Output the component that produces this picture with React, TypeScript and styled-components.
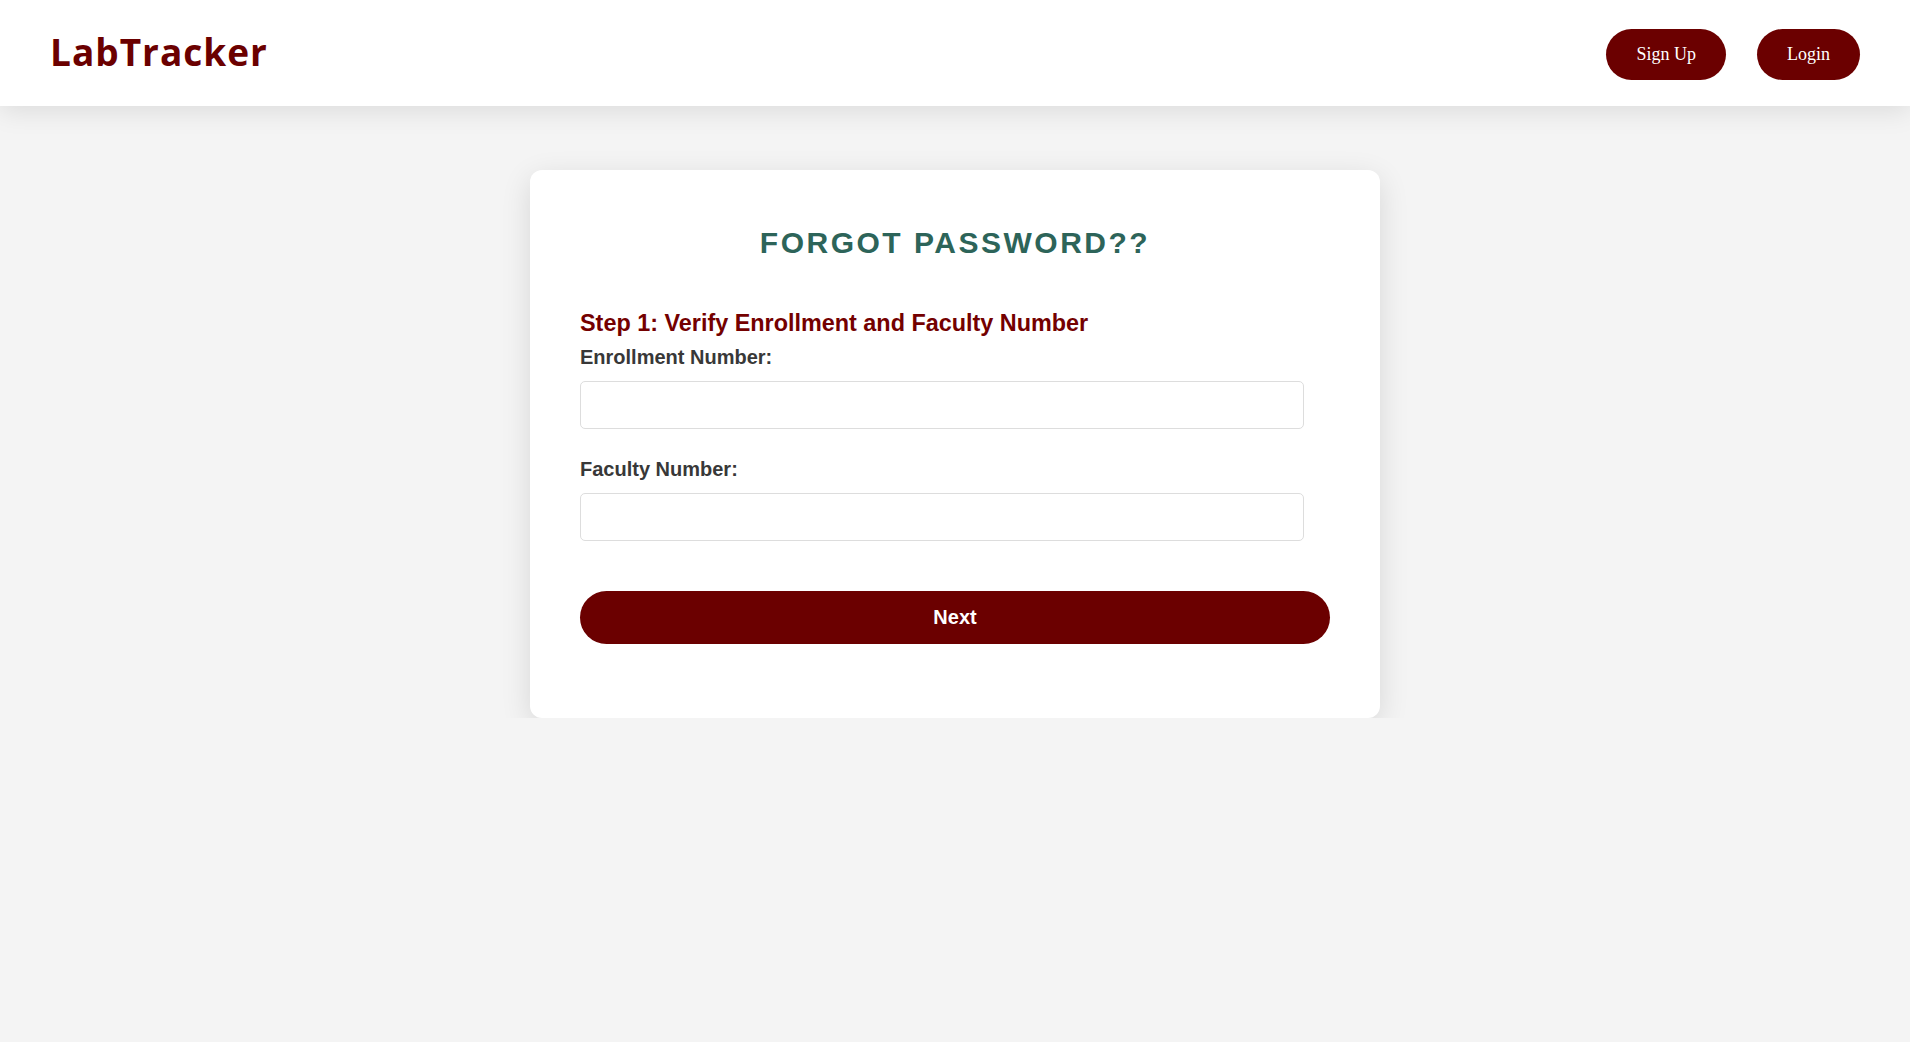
import React from "react";
import styled, { createGlobalStyle } from "styled-components";

const GlobalStyle = createGlobalStyle`
  html, body {
    margin: 0;
    padding: 0;
    background: #f4f4f4;
    font-family: "Liberation Sans", Arial, sans-serif;
  }
  * { box-sizing: border-box; }
`;

const Header = styled.header`
  height: 106px;
  background: #ffffff;
  display: flex;
  align-items: center;
  justify-content: space-between;
  padding: 0 50px 0 50px;
  box-shadow: 0 5px 25px rgba(0, 0, 0, 0.1);
  position: relative;
  z-index: 1;
`;

const Logo = styled.div`
  font-family: "Open Sans", sans-serif;
  font-weight: 700;
  font-size: 37px;
  letter-spacing: 1px;
  color: #6b0000;
  margin-top: -3px;
`;

const Nav = styled.nav`
  display: flex;
  align-items: center;
  gap: 31px;
  margin-top: 3px;
`;

const NavButton = styled.button`
  height: 51px;
  padding: 0 30px;
  border: none;
  border-radius: 26px;
  background: #6b0000;
  color: #ffffff;
  font-family: "Liberation Serif", "Times New Roman", serif;
  font-size: 18px;
  cursor: pointer;
`;

const Main = styled.main`
  display: flex;
  justify-content: center;
  padding-top: 64px;
`;

const Card = styled.section`
  width: 850px;
  background: #ffffff;
  border-radius: 12px;
  box-shadow: 0 8px 30px rgba(0, 0, 0, 0.12);
  padding: 56px 50px 74px 50px;
`;

const Title = styled.h2`
  margin: 0 0 50px 0;
  text-align: center;
  font-size: 30px;
  font-weight: 700;
  letter-spacing: 2.5px;
  color: #2d6459;
`;

const StepHeading = styled.h3`
  margin: 0 0 9px 0;
  font-size: 23.4px;
  font-weight: 700;
  color: #740000;
`;

const Field = styled.div<{ $spaced?: boolean }>`
  display: flex;
  flex-direction: column;
  align-items: flex-start;
  margin-top: ${(p) => (p.$spaced ? "29px" : "0")};
`;

const Label = styled.label`
  font-size: 20px;
  font-weight: 700;
  color: #383838;
  margin-bottom: 12px;
`;

const Input = styled.input`
  width: calc(100% - 26px);
  height: 48px;
  border: 1px solid #dddddd;
  border-radius: 5px;
  padding: 0 12px;
  font-size: 18px;
  font-family: "Liberation Sans", Arial, sans-serif;
  background: #ffffff;
  outline: none;
`;

const NextButton = styled.button`
  width: 100%;
  height: 53px;
  margin-top: 50px;
  border: none;
  border-radius: 27px;
  background: #6b0000;
  color: #ffffff;
  font-family: "Liberation Sans", Arial, sans-serif;
  font-size: 20px;
  font-weight: 700;
  cursor: pointer;
`;

export default function App() {
  return (
    <>
      <GlobalStyle />
      <Header>
        <Logo>LabTracker</Logo>
        <Nav>
          <NavButton>Sign Up</NavButton>
          <NavButton>Login</NavButton>
        </Nav>
      </Header>
      <Main>
        <Card>
          <Title>FORGOT PASSWORD??</Title>
          <StepHeading>Step 1: Verify Enrollment and Faculty Number</StepHeading>
          <Field>
            <Label htmlFor="enrollment">Enrollment Number:</Label>
            <Input id="enrollment" type="text" />
          </Field>
          <Field $spaced>
            <Label htmlFor="faculty">Faculty Number:</Label>
            <Input id="faculty" type="text" />
          </Field>
          <NextButton>Next</NextButton>
        </Card>
      </Main>
    </>
  );
}
